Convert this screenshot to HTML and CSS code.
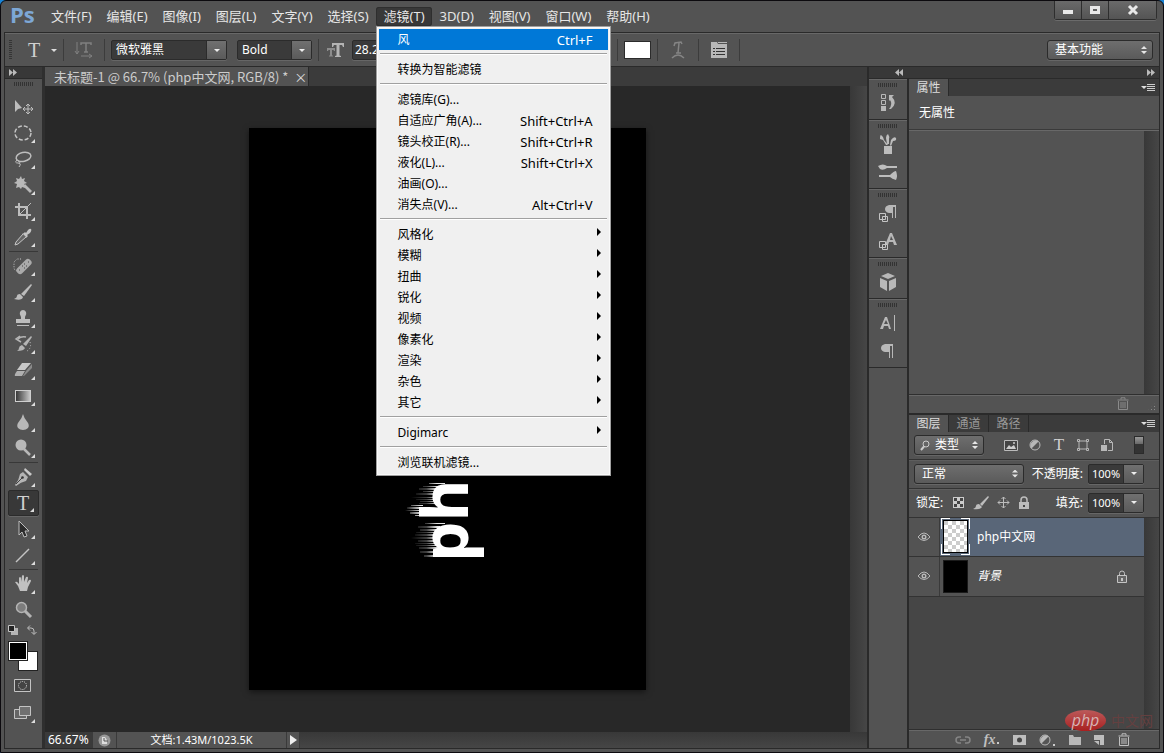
FILE: index.html
```html
<!DOCTYPE html>
<html lang="zh-CN">
<head>
    <meta charset="UTF-8">
    <meta name="viewport" content="width=device-width, initial-scale=1.0">
    <title>未标题-1 @ 66.7% (php中文网, RGB/8)</title>
    <link rel="stylesheet" href="styles.css">
</head>
<body>
    <div class="window">
        <!-- Menu bar -->
        <header class="menubar">
            <div class="logo">Ps</div>
            <nav class="menus">
                <button class="menu">文件(F)</button>
                <button class="menu">编辑(E)</button>
                <button class="menu">图像(I)</button>
                <button class="menu">图层(L)</button>
                <button class="menu">文字(Y)</button>
                <button class="menu">选择(S)</button>
                <div class="menu-open">
                    <button class="menu active">滤镜(T)</button>
                    <div class="dropdown">
                        <button class="item selected"><span>风</span><span class="shortcut">Ctrl+F</span></button>
                        <hr>
                        <button class="item">转换为智能滤镜</button>
                        <hr>
                        <button class="item">滤镜库(G)...</button>
                        <button class="item"><span>自适应广角(A)...</span><span class="shortcut">Shift+Ctrl+A</span></button>
                        <button class="item"><span>镜头校正(R)...</span><span class="shortcut">Shift+Ctrl+R</span></button>
                        <button class="item"><span>液化(L)...</span><span class="shortcut">Shift+Ctrl+X</span></button>
                        <button class="item">油画(O)...</button>
                        <button class="item"><span>消失点(V)...</span><span class="shortcut">Alt+Ctrl+V</span></button>
                        <hr>
                        <button class="item sub">风格化</button>
                        <button class="item sub">模糊</button>
                        <button class="item sub">扭曲</button>
                        <button class="item sub">锐化</button>
                        <button class="item sub">视频</button>
                        <button class="item sub">像素化</button>
                        <button class="item sub">渲染</button>
                        <button class="item sub">杂色</button>
                        <button class="item sub">其它</button>
                        <hr>
                        <button class="item sub">Digimarc</button>
                        <hr>
                        <button class="item">浏览联机滤镜...</button>
                    </div>
                </div>
                <button class="menu">3D(D)</button>
                <button class="menu">视图(V)</button>
                <button class="menu">窗口(W)</button>
                <button class="menu">帮助(H)</button>
            </nav>
            <div class="window-controls">
                <button aria-label="最小化"><svg width="12" height="12"><path d="M1 6h10v4H1z" fill="#e8e8e8"/></svg></button>
                <button aria-label="最大化"><svg width="12" height="12"><path d="M1 2h10v8H1zM4 5v2h4V5z" fill="#e8e8e8" fill-rule="evenodd"/></svg></button>
                <button class="close" aria-label="关闭"><svg width="12" height="12"><path d="M2 2l8 8M10 2l-8 8" stroke="#e8e8e8" stroke-width="3"/></svg></button>
            </div>
        </header>

        <div class="frame">
            <!-- Type tool options -->
            <div class="options">
                <span class="grip-v"></span>
                <button class="preset" aria-label="文字工具预设"><span class="serif-t">T</span><i class="caret"></i></button>
                <span class="divider"></span>
                <button class="opt-icon" aria-label="切换文本取向">
                    <svg width="20" height="18" fill="none" stroke="#808080"><path d="M3 1v12M1 10l2 3 2-3M7 15h11M15 13l3 2-3 2"/><path d="M7 4V2h10v2M12 2v9M10 11h4" stroke-width="1.500"/></svg>
                </button>
                <span class="divider"></span>
                <div class="combo font-family">
                    <select aria-label="字体"><option>微软雅黑</option></select><i></i>
                </div>
                <div class="combo font-style">
                    <select aria-label="字体样式"><option>Bold</option></select><i></i>
                </div>
                <span class="divider"></span>
                <label class="opt-icon" for="font-size" aria-label="字体大小">
                    <svg width="18" height="18" fill="#b4b4b4"><path d="M5 2h12v4h-1l-1-2h-2.500v10.500l1.500.5v1H8v-1l1.500-.5V4H7L6 6H5z"/><path d="M0 7h8v3H7l-.5-1H5v5.500h1v1H2v-1h1V9H1.500L1 10H0z" fill="#8c8c8c"/></svg>
                </label>
                <div class="combo font-size">
                    <input id="font-size" value="28.23 点"><i></i>
                </div>
                <span class="divider after-menu"></span>
                <button class="color-chip" aria-label="文本颜色"></button>
                <span class="divider"></span>
                <button class="opt-icon" aria-label="创建文字变形">
                    <svg width="18" height="20" fill="none" stroke="#858585"><path d="M5 6l1-3 6-1 1 2M10 3L9 13M7 13h5"  stroke-width="1.500"/><path d="M3 18q6-6 12 0" stroke-width="1.500"/></svg>
                </button>
                <span class="divider"></span>
                <button class="opt-icon" aria-label="字符和段落面板">
                    <svg width="18" height="18"><path d="M1 1h6l1 2h9v14H1z" fill="#b8b8b8"/><path d="M8 1h9v1H8z" fill="#b8b8b8"/><path d="M3 7.500h2M3 10.500h2M3 13.500h2M6 7.500h9M6 10.500h9M6 13.500h9" stroke="#333"/></svg>
                </button>
                <span class="divider"></span>
                <div class="stepper workspace-select">
                    <select aria-label="工作区"><option>基本功能</option></select>
                </div>
            </div>

            <main class="workspace">
                <!-- Tools -->
                <aside class="tools">
                    <div class="strip"><svg width="8" height="7" fill="#bbb"><path d="M0 0l4 3.500L0 7zM4 0l4 3.500L4 7z"/></svg></div>
                    <span class="grip"></span>
                    <div class="tool-group">
                        <button class="tool single" aria-label="移动"><svg viewBox="0 0 20 20"><path d="M2 3v12l3-3 4-1z" fill="#bdbdbd"/><path d="M15 7v10M10 12h10M13 9l2-2 2 2M13 15l2 2 2-2M12 10l-2 2 2 2M18 10l2 2-2 2" fill="none" stroke="#bdbdbd"/></svg></button>
                        <button class="tool" aria-label="椭圆选框"><svg viewBox="0 0 20 20"><ellipse cx="10" cy="10" rx="8" ry="7" fill="none" stroke="#c4c4c4" stroke-width="1.500" stroke-dasharray="4 2"/></svg></button>
                        <button class="tool" aria-label="套索"><svg viewBox="0 0 20 20" fill="none" stroke="#bdbdbd"><ellipse cx="10.500" cy="8" rx="7.500" ry="4.500" stroke-width="1.500" transform="rotate(-12 10 8)"/><path d="M4 11q-3 3 1 3t1 4M5 12q3 0 1 3"/></svg></button>
                        <button class="tool" aria-label="魔棒"><svg viewBox="0 0 20 20" fill="#b8b8b8"><path d="M8 1l1 3 3-1-1 3 3 2-3 1 1 4-3-1-1 2-2-2-3 1 1-4-3-1 3-2-1-3 3 1z"/><path d="M10 11l2-2 7 7-2 2z"/></svg></button>
                        <button class="tool" aria-label="裁剪"><svg viewBox="0 0 20 20" fill="none" stroke="#bdbdbd"><path d="M6 2v12h12M2 6h12v12" stroke-width="2"/><path d="M6 14L18 2" stroke-width="1"/></svg></button>
                        <button class="tool" aria-label="吸管"><svg viewBox="0 0 20 20"><path d="M11 6l1-1 1 1 2-3q2-2 3-1t-1 4l-3 2 1 1-2 2-4-4z" fill="#c4c4c4"/><path d="M10 7l-7 8-1 3 3-1 8-7" fill="#666" stroke="#c4c4c4"/></svg></button>
                    </div>
                    <hr>
                    <div class="tool-group">
                        <button class="tool" aria-label="污点修复画笔"><svg viewBox="0 0 20 20"><path d="M8 3H4L1 6v7l3 2" fill="none" stroke="#c4c4c4" stroke-dasharray="1 1.500"/><rect x="2" y="7" width="18" height="7" rx="3" fill="#aaa" transform="rotate(-45 11 10.500)"/><path d="M9 10h1M11 12h1M11 8h1M13 10h1M6 14h1M15 6h1" stroke="#444"/></svg></button>
                        <button class="tool" aria-label="画笔"><svg viewBox="0 0 20 20" fill="#bdbdbd"><path d="M18 2l1 1-8 11-3-2z"/><path d="M7 12l3 3q-1 4-9 2 3-1 3-3t3-2z"/></svg></button>
                        <button class="tool" aria-label="仿制图章"><svg viewBox="0 0 20 20" fill="#bdbdbd"><path d="M8 9Q6 6 7 4t3-2 3 2-1 5v2h5v4H3v-4h5zM4 17h12v1H4z"/></svg></button>
                        <button class="tool" aria-label="历史记录画笔"><svg viewBox="0 0 20 20" fill="#b4b4b4"><path d="M18 2l1 1-6 9-3-2zM9 11l3 3q-1 3-8 3 2-1 2-3t3-3z"/><path d="M13 3Q8 2 5 5M7 2L3 5l5 3" fill="none" stroke="#b4b4b4" stroke-width="1.500"/><path d="M17 8q2 6-3 9" fill="none" stroke="#c4c4c4" stroke-dasharray="1 2"/></svg></button>
                        <button class="tool" aria-label="橡皮擦"><svg viewBox="0 0 20 20"><path d="M9 3h9l-6 7H4z" fill="#c8c8c8"/><path d="M4 11h8l-3 5H2q-1-1 2-5z" fill="#b0b0b0"/><path d="M13 11l6-7v4l-8 8h-1z" fill="#8a8a8a"/></svg></button>
                        <button class="tool" aria-label="渐变"><svg viewBox="0 0 20 20"><defs><linearGradient id="grad"><stop stop-color="#333"/><stop offset="1" stop-color="#ccc"/></linearGradient></defs><rect x="2.500" y="4.500" width="15" height="11" fill="url(#grad)" stroke="#cfcfcf"/></svg></button>
                        <button class="tool" aria-label="模糊"><svg viewBox="0 0 20 20"><path d="M10 2q1 4 4 7.500t1 6.500q-2 2-5 2t-5-2q-2-3 1-6.500T10 2z" fill="#b8b8b8"/></svg></button>
                        <button class="tool" aria-label="减淡"><svg viewBox="0 0 20 20"><circle cx="8" cy="7" r="5.500" fill="#b8b8b8"/><path d="M11 11l6 6" stroke="#b8b8b8" stroke-width="2.500"/></svg></button>
                    </div>
                    <hr>
                    <div class="tool-group">
                        <button class="tool" aria-label="钢笔"><svg viewBox="0 0 20 20"><path d="M12 1l7 6-2 2-6-6z" fill="#c8c8c8"/><path d="M10 5l5 5-2 4q-5 1-10 5l-1-1Q6 13 7 7z" fill="#b4b4b4"/><path d="M3 17l6-6" stroke="#444"/><circle cx="9.500" cy="10.500" r="1.300" fill="#333"/></svg></button>
                        <button class="tool current" aria-label="横排文字"><span class="serif-t">T</span></button>
                        <button class="tool" aria-label="路径选择"><svg viewBox="0 0 20 20"><path d="M6 2v14l3-3 2 5 3-1-2-5h4z" fill="#2c2c2c" stroke="#bdbdbd"/></svg></button>
                        <button class="tool" aria-label="直线"><svg viewBox="0 0 20 20"><path d="M3 17L16 4" stroke="#c4c4c4" stroke-width="1.500"/></svg></button>
                    </div>
                    <hr>
                    <div class="tool-group">
                        <button class="tool" aria-label="抓手"><svg viewBox="0 0 20 20"><path d="M2 8q2-1 3 1l1 1V4q1-2 2 0v4l1-6q1-2 2 0v6l2-5q2-1 2 1l-1 5 2-3q2-1 2 1l-3 6-1 4H7l-2-5z" fill="#c0c0c0"/></svg></button>
                        <button class="tool single" aria-label="缩放"><svg viewBox="0 0 20 20"><circle cx="8.500" cy="7.500" r="5" fill="#7d7d7d" stroke="#b4b4b4" stroke-width="1.500"/><path d="M12 11l6 6" stroke="#b4b4b4" stroke-width="3"/></svg></button>
                    </div>
                    <div class="swatch-actions">
                        <svg width="10" height="10"><path d="M3 3h7v7H3z" fill="#b4b4b4"/><path d="M.5.5h6v6h-6z" fill="#222" stroke="#c4c4c4"/></svg>
                        <svg width="10" height="10" fill="none" stroke="#bdbdbd"><path d="M1 3h3q3 0 3 3v3M3 .5L.5 3 3 5.500M4.500 7L7 9.500 9.500 7"/></svg>
                    </div>
                    <div class="swatches">
                        <button class="background" aria-label="背景色"></button>
                        <button class="foreground" aria-label="前景色"></button>
                    </div>
                    <div class="tool-modes">
                        <button class="tool single" aria-label="快速蒙版"><svg viewBox="0 0 20 20"><path d="M1.500 3.500h16v12h-16z" fill="#444" stroke="#c4c4c4"/><circle cx="9.500" cy="9.500" r="4" fill="none" stroke="#ddd" stroke-dasharray="1 1"/></svg></button>
                        <button class="tool" aria-label="屏幕模式"><svg viewBox="0 0 20 20" fill="#666" stroke="#c4c4c4"><path d="M1.500 6.500h12v9h-12z"/><path d="M6.500 3.500h11v9h-11z" fill="#707070"/></svg></button>
                    </div>
                </aside>

                <!-- Document -->
                <section class="document">
                    <div class="doc-tabs">
                        <div class="doc-tab">未标题-1 @ 66.7% (php中文网, RGB/8) * <button aria-label="关闭文档">×</button></div>
                    </div>
                    <div class="doc-body">
                        <div class="canvas">
                            <svg class="paper" viewBox="0 0 397 562">
                                <defs>
                                    <linearGradient id="wind" gradientUnits="userSpaceOnUse" x1="162" x2="188" y1="0" y2="0">
                                        <stop stop-color="#fff" stop-opacity="0"/>
                                        <stop offset="0.6" stop-color="#fff" stop-opacity="0.25"/>
                                        <stop offset="1" stop-color="#fff" stop-opacity="0.9"/>
                                    </linearGradient>
                                    <linearGradient id="wind-stem" gradientUnits="userSpaceOnUse" x1="156" x2="172" y1="0" y2="0">
                                        <stop stop-color="#fff" stop-opacity="0"/>
                                        <stop offset="1" stop-color="#fff" stop-opacity="0.9"/>
                                    </linearGradient>
                                </defs>
                                <rect width="397" height="562" fill="#000"/>
                                <text class="artwork" transform="translate(219 434) rotate(-90)">php中文网</text>
                                <path fill="url(#wind)" d="M196 355h-16v1h16zM192 358h-18v1h18zM190 360h-20v2h20zM188 363h-14v1h14zM187 365h-20v2h20zM187 369h-26v1h26zM187 371h-20v1h20zM188 373h-17v1h17zM190 375h-20v1h20zM196 395h-20v1h20zM191 398h-22v2h22zM189 401h-18v2h18zM187 404h-20v1h20zM186 406h-20v2h20zM186 409h-24v2h24zM186 412h-17v2h17zM188 415h-22v1h22zM189 417h-22v1h22zM190 419h-20v2h20zM188 423h-17v2h17zM188 427h-13v2h13z"/>
                                <path fill="url(#wind-stem)" d="M174 377h-12v1h12zM174 379h-16v2h16zM174 382h-18v1h18zM174 384h-13v2h13zM174 387h-8v1h8z"/>
                            </svg>
                        </div>
                        <div class="v-scroll"></div>
                    </div>
                    <footer class="status">
                        <input class="zoom" aria-label="缩放比例" value="66.67%">
                        <span class="status-icon"><svg width="13" height="13"><circle cx="6.500" cy="6.500" r="6" fill="#999"/><path d="M4 3v7h5V6L7 3z" fill="#ddd"/><path d="M6 4v3h4" fill="none" stroke="#555"/></svg></span>
                        <span class="doc-info">文档:1.43M/1023.5K</span>
                        <button class="status-arrow" aria-label="状态栏选项"><svg width="7" height="10"><path d="M0 0l7 5-7 5z" fill="#eee"/></svg></button>
                        <span class="h-scroll"></span>
                    </footer>
                </section>

                <!-- Right side -->
                <aside class="side">
                    <div class="strip side-strip">
                        <svg width="8" height="7" fill="#bbb"><path d="M4 0v7L0 3.500zM8 0v7L4 3.500z"/></svg>
                        <svg width="8" height="7" fill="#bbb"><path d="M0 0l4 3.500L0 7zM4 0l4 3.500L4 7z"/></svg>
                    </div>
                    <div class="side-body">
                        <div class="dock">
                            <div class="dock-group">
                                <span class="grip"></span>
                                <button aria-label="历史记录"><svg viewBox="0 0 20 20"><path d="M3.500 1.500h4v4h-4zM3.500 7.500h4v4h-4z" fill="none" stroke="#b8b8b8"/><path d="M3 13h5v5H3zM11 2h5l-2 2q6 6-1 12h-2q4-5 1-9l-1 1z" fill="#b8b8b8"/></svg></button>
                            </div>
                            <div class="dock-group">
                                <span class="grip"></span>
                                <button aria-label="画笔预设"><svg viewBox="0 0 20 20" fill="#bdbdbd"><path d="M6 12h8v8H6zM8 11L5 6 2 5q0-4 1-4 3 2 3 5l4 5zM9 10L8 4q0-3 2-4 2 3 1 5v5zM12 11l1-5q3-4 5-2 1 3-3 3l-2 5z"/></svg></button>
                                <button aria-label="画笔"><svg viewBox="0 0 20 20" fill="#bdbdbd"><path d="M0 4q5-3 9 0h10v2H9q-4 3-7 1zM1 13h11q4-4 6-4 2 5 0 9-4-1-6-3H1z"/></svg></button>
                            </div>
                            <div class="dock-group">
                                <span class="grip"></span>
                                <button aria-label="段落样式"><svg viewBox="0 0 20 20"><path d="M11 2h7v13h-1V4h-2v11h-1v-5h-3q-4-1-4-4t4-4z" fill="#b8b8b8"/><path d="M4.500 13.500h5v5h-5zM1.500 10.500h6v6h-6z" fill="#535353" stroke="#c4c4c4"/></svg></button>
                                <button aria-label="字符样式"><svg viewBox="0 0 20 20"><path d="M12 2h2l5 12h-3l-1-3h-4l-1 3H7zM13 5l-1 4h3z" fill="#b8b8b8" fill-rule="evenodd"/><path d="M4.500 13.500h5v5h-5zM1.500 10.500h6v6h-6z" fill="#535353" stroke="#c4c4c4"/></svg></button>
                            </div>
                            <div class="dock-group">
                                <span class="grip"></span>
                                <button aria-label="3D"><svg viewBox="0 0 20 20" fill="#b8b8b8"><path d="M10 1l7 3-7 3-7-3zM2 6l7 3v10l-7-4zM18 6l-7 3v10l7-4z"/></svg></button>
                            </div>
                            <div class="dock-group">
                                <span class="grip"></span>
                                <button aria-label="字符"><svg viewBox="0 0 20 20"><path d="M7 4h2l4 12h-2l-1-3H6l-1 3H2zM8 7l-2 4h4z" fill="#b8b8b8" fill-rule="evenodd"/><path d="M16.500 2v16" stroke="#b8b8b8"/></svg></button>
                                <button aria-label="段落"><svg viewBox="0 0 20 20"><path d="M7 3h8v14h-1V5h-2v12h-1v-6H7Q3 10 3 7t4-4z" fill="#b8b8b8"/></svg></button>
                            </div>
                        </div>

                        <div class="panels">
                            <section class="panel properties">
                                <div class="panel-tabs">
                                    <button class="tab on">属性</button>
                                    <button class="panel-menu" aria-label="面板菜单"><i class="caret"></i><span class="bars"></span></button>
                                </div>
                                <div class="prop-title">无属性</div>
                                <div class="prop-body"><div class="v-scroll"></div></div>
                                <div class="prop-foot">
                                    <svg width="12" height="13" fill="none" stroke="#8a8a8a"><path d="M.5 3h11M4 2.500V.8h4v1.700M1.500 4v8.500h9V4M4 5v6M6 5v6M8 5v6"/></svg>
                                    <span class="resize"></span>
                                </div>
                            </section>

                            <section class="panel layers">
                                <div class="panel-tabs">
                                    <button class="tab on">图层</button>
                                    <button class="tab">通道</button>
                                    <button class="tab">路径</button>
                                    <button class="panel-menu" aria-label="面板菜单"><i class="caret"></i><span class="bars"></span></button>
                                </div>
                                <div class="row filter-row">
                                    <div class="stepper kind">
                                        <svg width="10" height="11" fill="none" stroke="#ccc"><circle cx="6" cy="4" r="3"/><path d="M4 6.500L1 10" stroke-width="2"/></svg>
                                        <select aria-label="图层过滤"><option>类型</option></select>
                                    </div>
                                    <div class="filters">
                                        <button aria-label="像素图层"><svg width="14" height="14"><path d="M.5 2.500h13v10H.5z" fill="#444" stroke="#bbb"/><path d="M2 11l3-4 2 2 3-2 2 4z" fill="#ccc"/><circle cx="10" cy="5" r="1" fill="#ccc"/></svg></button>
                                        <button aria-label="调整图层"><svg width="14" height="14"><circle cx="7" cy="7" r="5" fill="#555" stroke="#b8b8b8"/><path d="M3.500 10.500A5 5 0 0 1 10.500 3.500z" fill="#b8b8b8"/></svg></button>
                                        <button class="serif-t" aria-label="文字图层">T</button>
                                        <button aria-label="形状图层"><svg width="14" height="14" fill="#535353" stroke="#b8b8b8"><path d="M3 3h8v8H3z"/><path d="M1.500 1.500h2v2h-2zM10.500 1.500h2v2h-2zM1.500 10.500h2v2h-2zM10.500 10.500h2v2h-2z"/></svg></button>
                                        <button aria-label="智能对象"><svg width="14" height="14"><path d="M4.500 6V1.500h5l3 3v8H8M9.500 1.500v3h3" fill="none" stroke="#b8b8b8"/><path d="M1 7h6v6H1z" fill="#b8b8b8"/></svg></button>
                                    </div>
                                    <button class="filter-toggle" aria-label="打开过滤"></button>
                                </div>
                                <div class="row">
                                    <div class="stepper blend">
                                        <select aria-label="混合模式"><option>正常</option></select>
                                    </div>
                                    <label for="opacity">不透明度:</label>
                                    <div class="combo percent"><input id="opacity" value="100%"><i></i></div>
                                </div>
                                <div class="row">
                                    <span class="lock-label">锁定:</span>
                                    <div class="locks">
                                        <button aria-label="锁定透明像素"><svg width="13" height="13"><path d="M1 1h11v11H1z" fill="#ccc"/><path d="M2 2h3v3H2zM8 2h3v3H8zM5 5h3v3H5zM2 8h3v3H2zM8 8h3v3H8z" fill="#444"/></svg></button>
                                        <button aria-label="锁定图像像素"><svg width="16" height="14" fill="#bdbdbd"><path d="M15 0l1 1-7 9-2-2zM6 8l3 3q-2 3-9 2 3-1 3-3t3-2z"/></svg></button>
                                        <button aria-label="锁定位置"><svg width="13" height="13" fill="none" stroke="#bdbdbd"><path d="M6.500 1v11M1 6.500h11M4.500 3l2-2 2 2M4.500 10l2 2 2-2M3 4.500l-2 2 2 2M10 4.500l2 2-2 2"/></svg></button>
                                        <button aria-label="锁定全部"><svg width="12" height="14"><path d="M1 6h10v7H1z" fill="#bdbdbd"/><path d="M3 6V4q0-3 3-3t3 3v2" fill="none" stroke="#bdbdbd" stroke-width="1.500"/><path d="M5 9h2v2H5z" fill="#444"/></svg></button>
                                    </div>
                                    <label for="fill">填充:</label>
                                    <div class="combo percent"><input id="fill" value="100%"><i></i></div>
                                </div>
                                <div class="layer-area">
                                    <ul class="layer-list">
                                        <li class="layer selected">
                                            <button class="eye" aria-label="切换图层可见性"><svg width="12" height="10"><path d="M0 5q6-8 12 0-6 7-12 0z" fill="none" stroke="#b8b8b8"/><circle cx="6" cy="5" r="2.500" fill="#b8b8b8"/><circle cx="6" cy="5" r="1" fill="#444"/></svg></button>
                                            <span class="thumb checker"></span>
                                            <span class="layer-name">php中文网</span>
                                        </li>
                                        <li class="layer">
                                            <button class="eye" aria-label="切换图层可见性"><svg width="12" height="10"><path d="M0 5q6-8 12 0-6 7-12 0z" fill="none" stroke="#b8b8b8"/><circle cx="6" cy="5" r="2.500" fill="#b8b8b8"/><circle cx="6" cy="5" r="1" fill="#444"/></svg></button>
                                            <span class="thumb"></span>
                                            <span class="layer-name italic">背景</span>
                                            <svg class="layer-lock" width="12" height="13"><path d="M1.500 5.500h9v7h-9z" fill="#666" stroke="#c4c4c4"/><path d="M3.500 5V3.500q0-2.500 2.500-2.500t2.500 2.500V5" fill="none" stroke="#c4c4c4"/><path d="M5 8h2v3H5z" fill="#c4c4c4"/></svg>
                                        </li>
                                    </ul>
                                    <div class="v-scroll"></div>
                                </div>
                                <div class="layer-foot">
                                    <button aria-label="链接图层"><svg width="16" height="10" fill="none" stroke="#858585" stroke-width="1.500"><path d="M6 2H4a3 3 0 0 0 0 6h2M10 2h2a3 3 0 0 1 0 6h-2M5 5h6"/></svg></button>
                                    <button class="fx" aria-label="图层样式">fx<b></b></button>
                                    <button aria-label="添加蒙版"><svg width="14" height="12"><path d="M1 1h13v10H1z" fill="#bdbdbd"/><circle cx="7.500" cy="6" r="2.500" fill="#444"/></svg></button>
                                    <button aria-label="新建调整图层"><svg width="16" height="12"><circle cx="6" cy="6" r="5" fill="#555" stroke="#b8b8b8"/><path d="M2.500 9.500A5 5 0 0 1 9.500 2.500z" fill="#b8b8b8"/><path d="M14 10h2v2h-2z" fill="#ccc"/></svg></button>
                                    <button aria-label="新建组"><svg width="13" height="12"><path d="M1 1h4l1 2h7v8H1z" fill="#b8b8b8"/></svg></button>
                                    <button aria-label="新建图层"><svg width="12" height="12"><path d="M1 1h10v10H7V6H1z" fill="#bdbdbd"/><path d="M1 7h5v4z" fill="#bdbdbd"/></svg></button>
                                    <button aria-label="删除图层"><svg width="12" height="13" fill="none" stroke="#c0c0c0"><path d="M.5 3h11M4 2.500V.8h4v1.700M1.500 4v8.500h9V4M4 5v6M6 5v6M8 5v6"/></svg></button>
                                </div>
                            </section>
                        </div>
                    </div>
                </aside>
            </main>
        </div>

        <div class="watermark"><span class="oval">php</span><span>中文网</span></div>
    </div>
</body>
</html>
```
FILE: styles.css
```css
* {
    margin: 0;
    padding: 0;
    box-sizing: border-box;
}

html {
    background: #1883d7;
}

body {
    font-family: "Noto Sans", "Noto Sans CJK SC", sans-serif;
    font-size: 12px;
    line-height: 16px;
    color: #e6e6e6;
}

button, input, select {
    font: inherit;
    color: inherit;
    background: none;
    border: none;
    border-radius: 0;
    outline: none;
}

svg {
    display: block;
}

.window {
    position: relative;
    display: flex;
    flex-direction: column;
    height: 100vh;
    min-height: 700px;
    padding: 0 3px 3px;
    background: #535353;
    border: 1px solid #0c0a0e;
    border-radius: 6px 6px 0 0;
}

/* Menu bar */
.menubar {
    display: flex;
    align-items: center;
    height: 31px;
}

.logo {
    width: 39px;
    padding: 0 0 5px 6px;
    font: bold 22px/22px "Open Sans", sans-serif;
    color: #7da7d6;
}

.menus {
    display: flex;
}

.menu {
    height: 19px;
    padding: 0 7px 0 8px;
    font-size: 13px;
    line-height: 19px;
    white-space: nowrap;
    border-radius: 3px;
}

.menu.active {
    background: #383838;
    box-shadow: 0 0 0 1px #2e2e2e inset;
}

.menu-open {
    position: relative;
}

.dropdown {
    position: absolute;
    top: 100%;
    left: 0;
    z-index: 10;
    width: 235px;
    padding: 2px;
    color: #000;
    background: #f0f0f0;
    border: 1px solid #a0a0a0;
    box-shadow: inset 0 0 0 1px #fafafa;
}

.dropdown hr {
    height: 2px;
    margin: 3px 1px 4px;
    border: none;
    border-top: 1px solid #a0a0a0;
    background: #fff;
}

.item {
    display: flex;
    align-items: center;
    justify-content: space-between;
    width: 100%;
    height: 21px;
    padding: 0 15px 0 19px;
}

.item.selected {
    color: #fff;
    background: #0078d7;
}

.shortcut {
    font-size: 13px;
}

.item.sub {
    padding-right: 7px;
}

.item.sub::after {
    content: "";
    margin-bottom: 6px;
    border: 4px solid transparent;
    border-left-color: #000;
    border-right: none;
}

.window-controls {
    display: flex;
    align-self: flex-start;
    margin-left: auto;
    margin-right: 3px;
    border: 1px solid #2e2e2e;
    border-top: none;
    border-radius: 0 0 3px 3px;
    box-shadow: 0 1px 0 #6b6b6b;
}

.window-controls button {
    display: flex;
    align-items: center;
    justify-content: center;
    width: 27px;
    height: 18px;
    background: linear-gradient(#6a6a6a, #545454);
    border-right: 1px solid #2e2e2e;
}

.window-controls .close {
    width: 47px;
    border-right: none;
}

.frame {
    display: flex;
    flex: 1;
    flex-direction: column;
    min-height: 0;
    border: 1px solid #2a2a2a;
}

/* Options bar */
.options {
    display: flex;
    align-items: center;
    height: 33px;
    padding: 0 6px 0 4px;
    border-top: 1px solid #686868;
}

.grip-v {
    width: 3px;
    height: 20px;
    background: repeating-linear-gradient(#353535 0 1px, transparent 1px 2px);
}

.serif-t {
    font: 20px/20px "Liberation Serif", serif;
    color: #d0d0d0;
}

.preset {
    display: flex;
    align-items: center;
    gap: 11px;
    width: 51px;
    padding-left: 16px;
}

.caret {
    border: 3px solid transparent;
    border-top-color: #ddd;
    border-bottom: none;
}

.divider {
    width: 1px;
    height: 22px;
    background: #3c3c3c;
}

.opt-icon {
    display: flex;
    justify-content: center;
    width: 40px;
}

label.opt-icon {
    width: 33px;
}

.combo {
    display: flex;
    height: 20px;
    background: #3a3a3a;
    border: 1px solid #2b2b2b;
    border-radius: 2px;
    box-shadow: 0 1px 0 #666;
}

.combo select,
.combo input {
    flex: 1;
    min-width: 0;
    padding-left: 4px;
    color: #fff;
    appearance: none;
}

.combo i {
    display: flex;
    align-items: center;
    justify-content: center;
    width: 20px;
    background: linear-gradient(#707070, #5a5a5a);
    border-left: 1px solid #2b2b2b;
}

.combo i::after {
    content: "";
    border: 3px solid transparent;
    border-top-color: #eee;
    border-bottom: none;
}

.font-family {
    width: 116px;
    margin: 0 10px 0 6px;
}

.font-style {
    width: 75px;
    margin-right: 6px;
}

.combo.font-size input {
    padding-left: 2px;
}

.font-size {
    width: 72px;
}

.after-menu {
    margin-left: 193px;
}

.color-chip {
    width: 27px;
    height: 18px;
    margin: 0 6px;
    background: #fff;
    border: 1px solid #2b2b2b;
}

.stepper {
    display: flex;
    align-items: center;
    height: 20px;
    padding-right: 5px;
    background: linear-gradient(#6e6e6e, #5a5a5a);
    border: 1px solid #2b2b2b;
    border-radius: 3px;
    box-shadow: 0 1px 0 #666;
}

.stepper select {
    flex: 1;
    min-width: 0;
    padding-left: 7px;
    color: #fff;
    appearance: none;
}

.stepper::after {
    content: "";
    width: 6px;
    height: 8px;
    background: #e6e6e6;
    clip-path: polygon(50% 0, 100% 38%, 0 38%, 0 62%, 100% 62%, 50% 100%, 0 62%, 0 38%);
}

.workspace-select {
    width: 106px;
    margin-left: auto;
}

/* Workspace */
.workspace {
    display: flex;
    flex: 1;
    min-height: 0;
    border-top: 1px solid #2a2a2a;
}

.strip {
    display: flex;
    align-items: center;
    height: 12px;
    padding-left: 4px;
    background: #383838;
    border-bottom: 1px solid #2a2a2a;
}

.grip {
    display: block;
    width: 20px;
    height: 4px;
    margin: 3px auto 0;
    background: repeating-linear-gradient(90deg, #333 0 1px, transparent 1px 2px);
}

.tools {
    display: flex;
    flex-direction: column;
    width: 40px;
    border-right: 3px solid #2f2f2f;
}

.tools > .grip {
    margin-bottom: 8px;
}

.tools hr {
    margin: 1px 4px;
    border: none;
    border-top: 1px solid #383838;
}

.tool {
    position: relative;
    display: flex;
    align-items: center;
    justify-content: center;
    width: 31px;
    height: 26px;
    margin: 0 auto;
    padding-right: 1px;
    border-radius: 2px;
}

.tool svg {
    width: 20px;
    height: 20px;
}

.tool::after {
    content: "";
    position: absolute;
    right: 4px;
    bottom: 3px;
    border: 2px solid #ddd;
    border-top-color: transparent;
    border-left-color: transparent;
}

.tool.single::after {
    display: none;
}

.tool.current {
    background: #383838;
    border: 1px solid #2b2b2b;
    box-shadow: 0 1px 0 #666;
}

.swatch-actions {
    display: flex;
    gap: 9px;
    padding: 2px 0 0 3px;
}

.swatches {
    position: relative;
    width: 30px;
    height: 30px;
    margin: 6px 0 0 3px;
}

.swatches button {
    position: absolute;
    border: 1px solid #222;
}

.foreground {
    top: 0;
    left: 0;
    width: 20px;
    height: 20px;
    background: #000;
    box-shadow: inset 0 0 0 1px #fff;
}

.background {
    right: 0;
    bottom: 0;
    width: 20px;
    height: 20px;
    background: #fff;
}

.tool-modes {
    display: grid;
    gap: 1px;
    padding-top: 2px;
}

/* Document */
.document {
    display: flex;
    flex: 1;
    flex-direction: column;
    min-width: 0;
}

.doc-tabs {
    display: flex;
    height: 19px;
    background: #3b3b3b;
}

.doc-tab {
    height: 19px;
    padding: 0 6px 0 9px;
    font: 13px/20px "Noto Sans CJK SC", sans-serif;
    color: #ccc;
    white-space: nowrap;
    background: #535353;
    border-right: 1px solid #2a2a2a;
}

.doc-tab button {
    width: 8px;
    margin-left: 3px;
    color: #ddd;
}

.doc-body {
    display: flex;
    flex: 1;
    min-height: 0;
}

.canvas {
    display: flex;
    flex: 1;
    align-items: center;
    justify-content: center;
    overflow: hidden;
    background: #282828;
}

.paper {
    flex: none;
    width: 397px;
    height: 562px;
    box-shadow: 0 2px 6px rgba(0, 0, 0, 0.5);
}

.artwork {
    font: bold 64px "Open Sans", "Noto Sans CJK SC", sans-serif;
    fill: #fff;
}

.v-scroll {
    width: 15px;
    background: linear-gradient(90deg, #383838, #464646);
}

.document .v-scroll {
    width: 17px;
}

.status {
    display: flex;
    height: 16px;
    color: #fff;
}

.zoom {
    width: 48px;
    padding-left: 3px;
    background: #3a3a3a;
}

.status-icon {
    display: flex;
    align-items: center;
    justify-content: center;
    width: 24px;
    border-right: 1px solid #3a3a3a;
}

.doc-info {
    width: 169px;
    font-size: 11px;
    text-align: center;
}

.status-arrow {
    display: flex;
    align-items: center;
    width: 14px;
    padding-left: 3px;
    border: 1px solid #3a3a3a;
    border-width: 0 1px;
}

.h-scroll {
    flex: 1;
    background: linear-gradient(#383838, #464646);
}

/* Right side */
.side {
    display: flex;
    flex-direction: column;
    width: 292px;
    border-left: 2px solid #2a2a2a;
}

.side-strip {
    justify-content: space-between;
    padding: 0 4px 0 26px;
}

.side-body {
    display: flex;
    flex: 1;
    min-height: 0;
}

.dock {
    width: 40px;
    border-right: 2px solid #2a2a2a;
}

.dock-group {
    padding-bottom: 2px;
    border-top: 1px solid #686868;
    border-bottom: 1px solid #2a2a2a;
}

.dock-group .grip {
    margin-bottom: 2px;
}

.dock-group button {
    display: flex;
    align-items: center;
    justify-content: center;
    width: 100%;
    height: 28px;
}

.dock-group svg {
    width: 20px;
    height: 20px;
}

.panels {
    display: flex;
    flex: 1;
    flex-direction: column;
    gap: 2px;
    min-width: 0;
    background: #2a2a2a;
}

.panel {
    display: flex;
    flex: 1;
    flex-direction: column;
    background: #535353;
}

.panel-tabs {
    display: flex;
    height: 17px;
    background: #3b3b3b;
}

.tab {
    width: 40px;
    line-height: 17px;
    color: #999;
    border-right: 1px solid #2a2a2a;
}

.tab.on {
    color: #ddd;
    background: #535353;
}

.panel-menu {
    display: flex;
    align-items: center;
    margin: 0 4px 0 auto;
}

.bars {
    width: 8px;
    height: 7px;
    background: repeating-linear-gradient(#ccc 0 1px, transparent 1px 2px);
}

.prop-title {
    height: 34px;
    padding: 0 10px;
    line-height: 34px;
    color: #fff;
    border-bottom: 1px solid #3a3a3a;
}

.prop-body {
    display: flex;
    flex: 1;
    justify-content: flex-end;
    border-top: 1px solid #686868;
}

.prop-foot {
    display: flex;
    align-items: center;
    justify-content: flex-end;
    gap: 18px;
    height: 19px;
    border-top: 1px solid #2f2f2f;
    box-shadow: inset 0 1px 0 #686868;
}

.resize {
    width: 10px;
    height: 10px;
    margin: 6px 2px 0 0;
    background: radial-gradient(#8a8a8a 1px, transparent 1px) 0 0 / 3px 3px;
    clip-path: polygon(100% 0, 100% 100%, 0 100%);
}

.row {
    display: flex;
    align-items: center;
    height: 29px;
    padding: 0 15px 0 5px;
    color: #fff;
    border-bottom: 1px solid #333;
    box-shadow: inset 0 1px 0 #5e5e5e;
}

.filter-row {
    height: 28px;
    box-shadow: none;
}

.row label {
    flex: none;
    margin: 0 5px 0 auto;
}

.kind {
    width: 70px;
    padding-left: 5px;
}

.kind select {
    padding-left: 5px;
}

.blend {
    width: 110px;
}

.filters {
    display: flex;
    gap: 10px;
    margin-left: 20px;
}

.filters button {
    width: 14px;
    height: 14px;
}

.filters .serif-t {
    font-size: 17px;
    line-height: 14px;
}

.filter-toggle {
    width: 10px;
    height: 18px;
    margin-left: auto;
    background: linear-gradient(#999, #666 45%, #333 45%);
    border: 1px solid #2b2b2b;
}

.percent {
    width: 56px;
}

.percent input {
    padding-left: 3px;
    font-size: 11px;
}

.lock-label {
    width: 38px;
    padding-left: 2px;
}

.locks {
    display: flex;
    align-items: center;
    gap: 8px;
}

.layer-area {
    display: flex;
    flex: 1;
    background: #464646;
    border-bottom: 1px solid #2f2f2f;
}

.layer-list {
    flex: 1;
    list-style: none;
}

.layer {
    display: flex;
    align-items: center;
    height: 40px;
    background: #535353;
    border-bottom: 1px solid #333;
}

.eye {
    display: flex;
    align-items: center;
    justify-content: center;
    width: 31px;
    height: 39px;
    border-right: 1px solid #3a3a3a;
}

.layer.selected {
    height: 39px;
    background: linear-gradient(90deg, #535353 31px, #596678 31px);
}

.thumb {
    position: relative;
    width: 25px;
    height: 33px;
    margin: 0 9px 0 3px;
    background: #000;
    border: 1px solid #1a1a1a;
}

.checker {
    background: repeating-conic-gradient(#fff 0 25%, #ccc 0 50%) 0 0 / 8px 8px;
    border-color: #000;
}

/* corner brackets round the active thumbnail */
.checker::after {
    content: "";
    position: absolute;
    inset: -3px;
    border: 1px solid #fff;
    mask: linear-gradient(90deg, #000 9px, transparent 9px calc(100% - 9px), #000 0), linear-gradient(#000 11px, transparent 11px calc(100% - 11px), #000 0);
    mask-composite: intersect;
}

.layer-name {
    color: #fff;
}

.italic {
    font-style: italic;
}

.layer-lock {
    margin: 0 16px 0 auto;
}

.layer-foot {
    display: flex;
    align-items: center;
    justify-content: space-between;
    height: 18px;
    padding: 1px 29px 0 46px;
    box-shadow: inset 0 1px 0 #686868;
}

.fx {
    font: italic bold 14px/16px "Liberation Serif", serif;
    color: #c0c0c0;
}

.fx b {
    display: inline-block;
    width: 2px;
    height: 2px;
    margin-left: 2px;
    background: #ccc;
}

/* Site mark */
.watermark {
    position: absolute;
    right: 10px;
    bottom: 21px;
    display: flex;
    align-items: center;
    gap: 5px;
    font-size: 14px;
    line-height: 21px;
    color: #644040;
}

.oval {
    width: 41px;
    font: italic 16px/21px "Open Sans", sans-serif;
    text-align: center;
    color: #d8b4b4;
    background: linear-gradient(#bc5a5a, #a82020);
    border-radius: 50%;
}
```
